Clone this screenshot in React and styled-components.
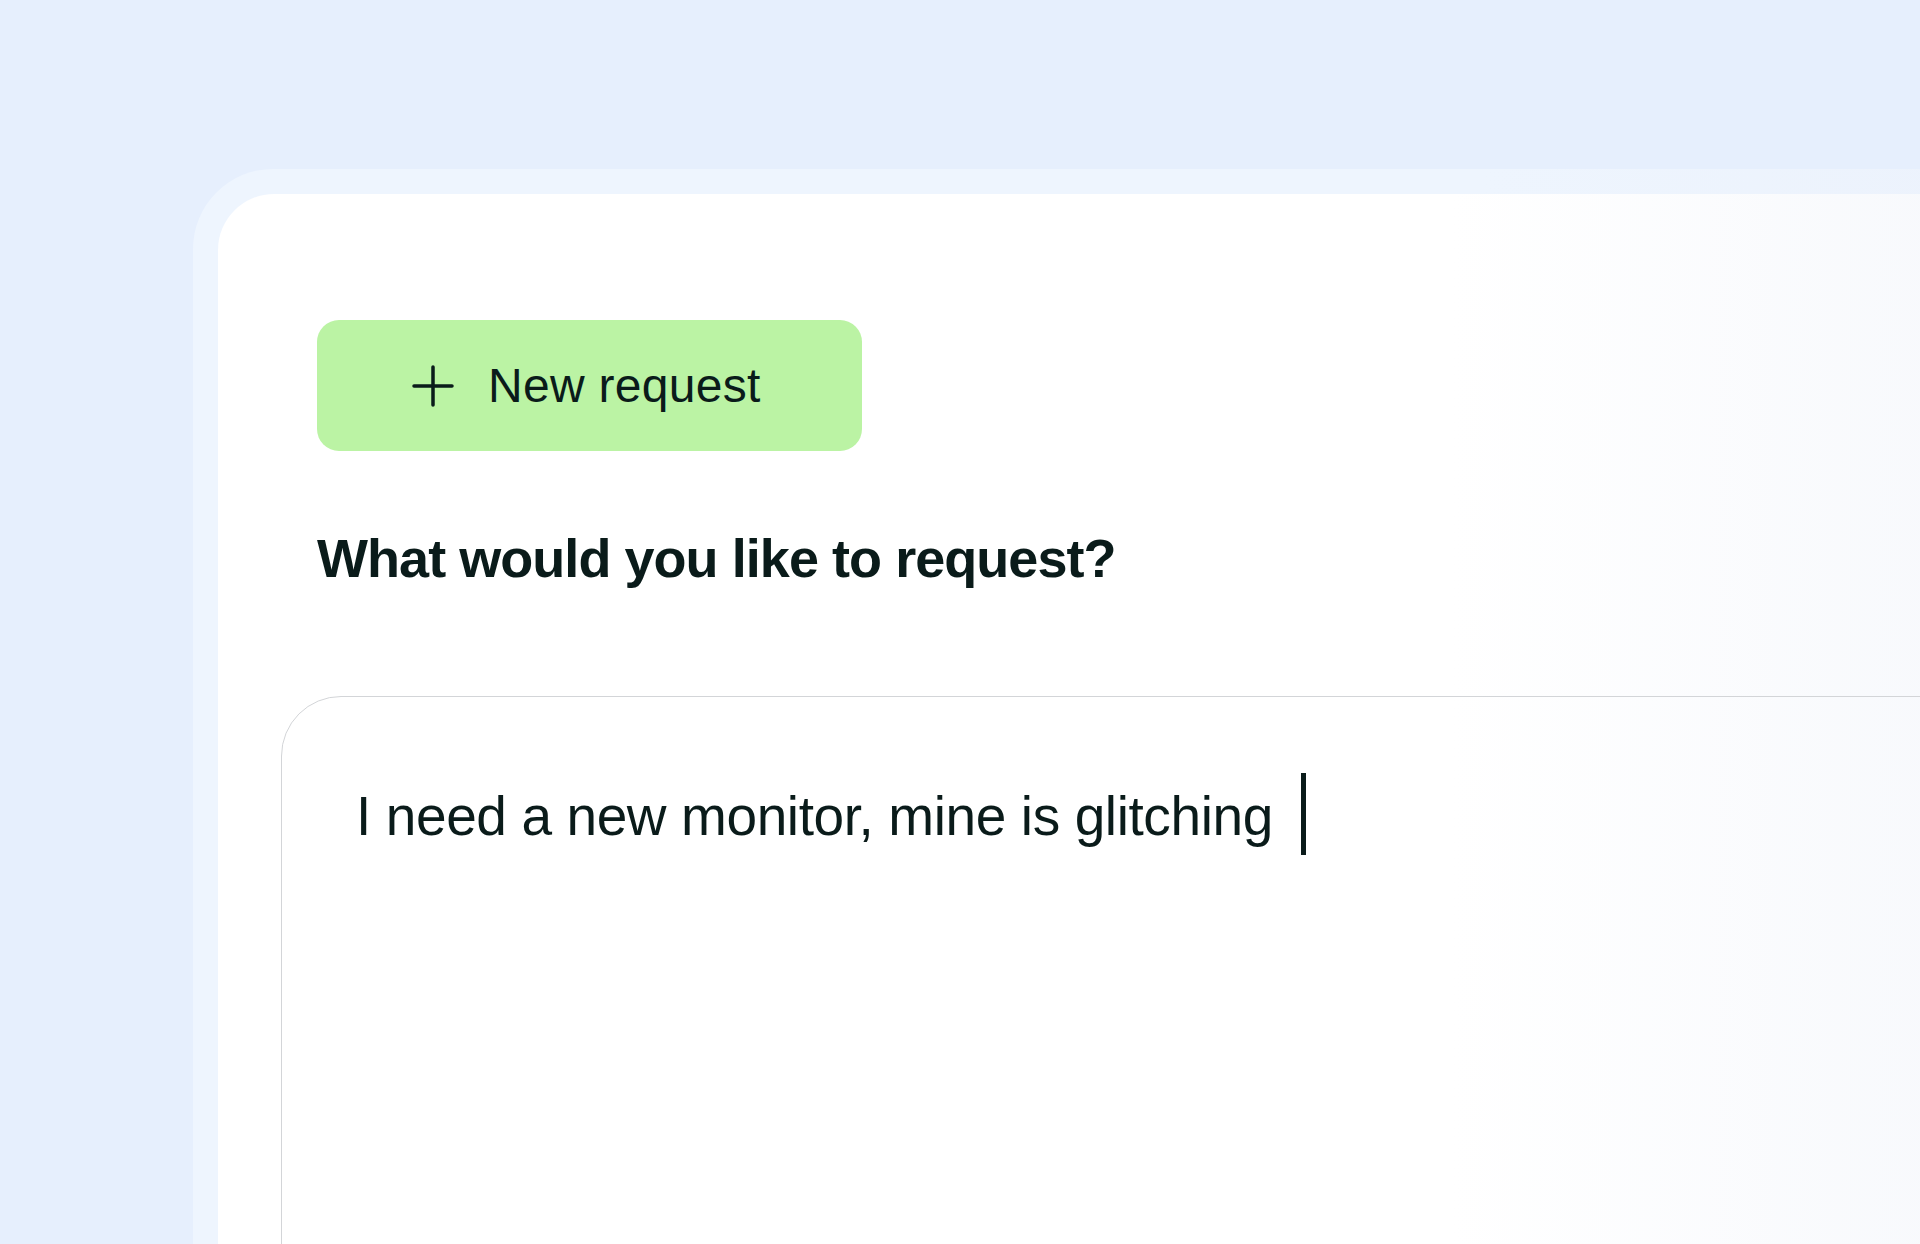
import React from 'react';
import styled, { createGlobalStyle } from 'styled-components';

const GlobalStyle = createGlobalStyle`
  html, body {
    margin: 0;
    padding: 0;
    background: #e6effd;
    overflow: hidden;
  }

  body {
    font-family: 'Liberation Sans', Arial, sans-serif;
    color: #0a1b1a;
  }
`;

export default function App() {
  return (
    <>
      <GlobalStyle />
      <Page>
        <Frame>
          <Card>
            <Header>
              <NewButton type='button'>
                <PlusIcon />
                <span>New request</span>
              </NewButton>
              <Question>What would you like to request?</Question>
            </Header>

            <Field>
              <TextLine>
                <span>I need a new monitor, mine is glitching</span>
                <Caret />
              </TextLine>
            </Field>
          </Card>
        </Frame>
      </Page>
    </>
  );
}

function PlusIcon() {
  return (
    <svg width='42' height='42' viewBox='0 0 42 42' fill='none'>
      <path
        d='M21 2v38M2 21h38'
        stroke='#0a1b1a'
        strokeWidth='3.5'
        strokeLinecap='round'
      />
    </svg>
  );
}

const Page = styled.div`
  width: 1920px;
  height: 1244px;
  overflow: hidden;
  padding: 169px 0 0 193px;
  box-sizing: border-box;
`;

const Frame = styled.div`
  width: 1840px;
  height: 1200px;
  padding: 25px 0 0 25px;
  box-sizing: border-box;
  background: linear-gradient(90deg, #eef5fe 0%, #eef5fe 70%, #ecf2fc 100%);
  border-top-left-radius: 80px;
`;

const Card = styled.div`
  height: 100%;
  padding: 126px 0 0 63px;
  box-sizing: border-box;
  background: linear-gradient(90deg, #ffffff 0%, #ffffff 68%, #f6f8fc 100%);
  border-top-left-radius: 56px;
`;

const Header = styled.div`
  display: flex;
  flex-direction: column;
  align-items: flex-start;
  padding-left: 36px;
`;

const NewButton = styled.button`
  display: flex;
  align-items: center;
  gap: 34px;
  width: 545px;
  height: 131px;
  padding: 0 0 0 95px;
  box-sizing: border-box;
  border: none;
  border-radius: 22px;
  background: #bbf3a4;
  color: #0a1b1a;
  font-family: 'Liberation Sans', Arial, sans-serif;
  font-size: 48px;
  letter-spacing: 0.3px;
  cursor: pointer;
`;

const Question = styled.h2`
  margin: 80px 0 0;
  font-size: 54px;
  line-height: 1;
  font-weight: 700;
  letter-spacing: -0.95px;
`;

const Field = styled.div`
  margin-top: 111px;
  height: 700px;
  padding: 92px 0 0 74px;
  box-sizing: border-box;
  border: 1.5px solid #d3d5d8;
  border-top-left-radius: 60px;
`;

const TextLine = styled.div`
  display: flex;
  align-items: flex-start;
  font-size: 55px;
  line-height: 1;
  letter-spacing: -0.4px;
`;

const Caret = styled.div`
  width: 5px;
  height: 82px;
  margin: -16px 0 0 28px;
  background: #0a1b1a;
`;
